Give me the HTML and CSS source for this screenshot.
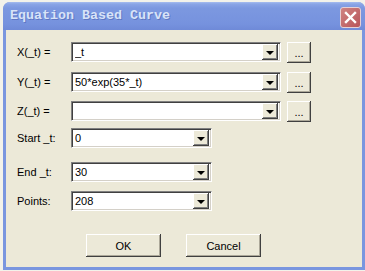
FILE: index.html
```html
<!DOCTYPE html>
<html lang="en">
<head>
    <meta charset="UTF-8">
    <meta name="viewport" content="width=device-width, initial-scale=1.0">
    <title>Equation Based Curve</title>
    <link rel="stylesheet" href="styles.css">
</head>
<body>
    <div class="window">
        <div class="titlebar">
            <span class="title">Equation Based Curve</span>
            <span class="close">
                <svg width="13" height="13" viewBox="0 0 13 13">
                    <path d="M2 2 L11 11 M11 2 L2 11" stroke="#fff" stroke-width="2.4" stroke-linecap="square"/>
                </svg>
            </span>
        </div>
        <div class="client">
            <!-- equation rows -->
            <div class="row r-x">
                <span class="label">X(_t) =</span>
                <div class="combo wide"><span class="value">_t</span><span class="drop"><i></i></span></div>
                <button class="more">...</button>
            </div>
            <div class="row r-y">
                <span class="label">Y(_t) =</span>
                <div class="combo wide"><span class="value">50*exp(35*_t)</span><span class="drop"><i></i></span></div>
                <button class="more">...</button>
            </div>
            <div class="row r-z">
                <span class="label">Z(_t) =</span>
                <div class="combo wide"><span class="value"></span><span class="drop"><i></i></span></div>
                <button class="more">...</button>
            </div>

            <!-- range rows -->
            <div class="row r-start">
                <span class="label">Start _t:</span>
                <div class="combo short"><span class="value">0</span><span class="drop"><i></i></span></div>
            </div>
            <div class="row r-end">
                <span class="label">End _t:</span>
                <div class="combo short"><span class="value">30</span><span class="drop"><i></i></span></div>
            </div>
            <div class="row r-points">
                <span class="label">Points:</span>
                <div class="combo short"><span class="value">208</span><span class="drop"><i></i></span></div>
            </div>

            <div class="actions">
                <button class="btn">OK</button>
                <button class="btn">Cancel</button>
            </div>
        </div>
    </div>
</body>
</html>
```

FILE: styles.css
```css
/* Windows XP style dialog */
* { box-sizing: border-box; }
body { margin: 0; background-color: #f3f2ea; font-family: "Liberation Sans", Arial, sans-serif; font-size: 11px; color: #000; height: 271px; overflow: hidden; }

.window {
    margin: 2px 0 0 3px;
    width: 362px;
    height: 268px;
    background-color: #7a96df;
    border-radius: 7px 7px 0 0;
    padding: 0 3px 3px 3px;
    display: flex;
    flex-direction: column;
}
.titlebar {
    height: 28px;
    margin: 0 -3px;
    padding: 0 4px 0 7px;
    border-radius: 7px 7px 0 0;
    background: linear-gradient(to bottom, #a6bcef 0px, #8aa5e6 2px, #7c98e0 6px, #7692de 22px, #6f8ad8 28px);
    display: flex;
    align-items: center;
    justify-content: space-between;
}
.title {
    font-family: "Liberation Mono", "Courier New", monospace;
    font-weight: bold;
    font-size: 13.33px;
    color: #d8e3f8;
    text-shadow: 1px 1px 0 #5f78c4;
    letter-spacing: 0;
    margin-top: -1px;
}
.close {
    width: 21px;
    height: 21px;
    border: 1px solid #e6d0d4;
    border-radius: 3px;
    background: linear-gradient(135deg, #d08482, #b8555a);
    display: flex;
    align-items: center;
    justify-content: center;
    margin-top: 2px;
}

.client {
    flex: 1;
    background-color: #ece9d8;
    padding: 12px 0 0 11px;
    position: relative;
}
.row { display: flex; align-items: center; height: 20px; }
.r-y { margin-top: 10px; }
.r-z { margin-top: 9px; }
.r-start { margin-top: 7px; }
.r-end { margin-top: 14px; }
.r-points { margin-top: 9px; }

.label { width: 54px; white-space: nowrap; }

.combo {
    height: 20px;
    background-color: #fff;
    border-top: 1px solid #808080;
    border-left: 1px solid #808080;
    border-right: 1px solid #fff;
    border-bottom: 1px solid #fff;
    box-shadow: inset 1px 1px 0 #404040, inset -1px -1px 0 #d4d0c8;
    display: flex;
    align-items: center;
    padding: 0 2px 0 3px;
}
.combo.wide { width: 210px; }
.combo.short { width: 141px; }
.value { flex: 1; white-space: nowrap; overflow: hidden; }
.drop {
    width: 16px;
    height: 16px;
    background-color: #ece9d8;
    box-shadow: inset -1px -1px 0 #404040, inset 1px 1px 0 #fff, inset -2px -2px 0 #808080;
    display: flex;
    align-items: center;
    justify-content: center;
}
.drop i {
    width: 0;
    height: 0;
    border-left: 4px solid transparent;
    border-right: 4px solid transparent;
    border-top: 4px solid #000;
    margin: 1px 1px 0 0;
}

button {
    font-family: "Liberation Sans", Arial, sans-serif;
    font-size: 11px;
    color: #000;
    background-color: #ece9d8;
    border: none;
    padding: 0;
    box-shadow: inset -1px -1px 0 #404040, inset 1px 1px 0 #fff, inset -2px -2px 0 #aca899;
}
.more { width: 24px; height: 21px; margin-left: 6px; padding-top: 2px; }

.actions { display: flex; gap: 25px; margin: 23px 0 0 69px; }
.btn { width: 75px; height: 23px; }
```
